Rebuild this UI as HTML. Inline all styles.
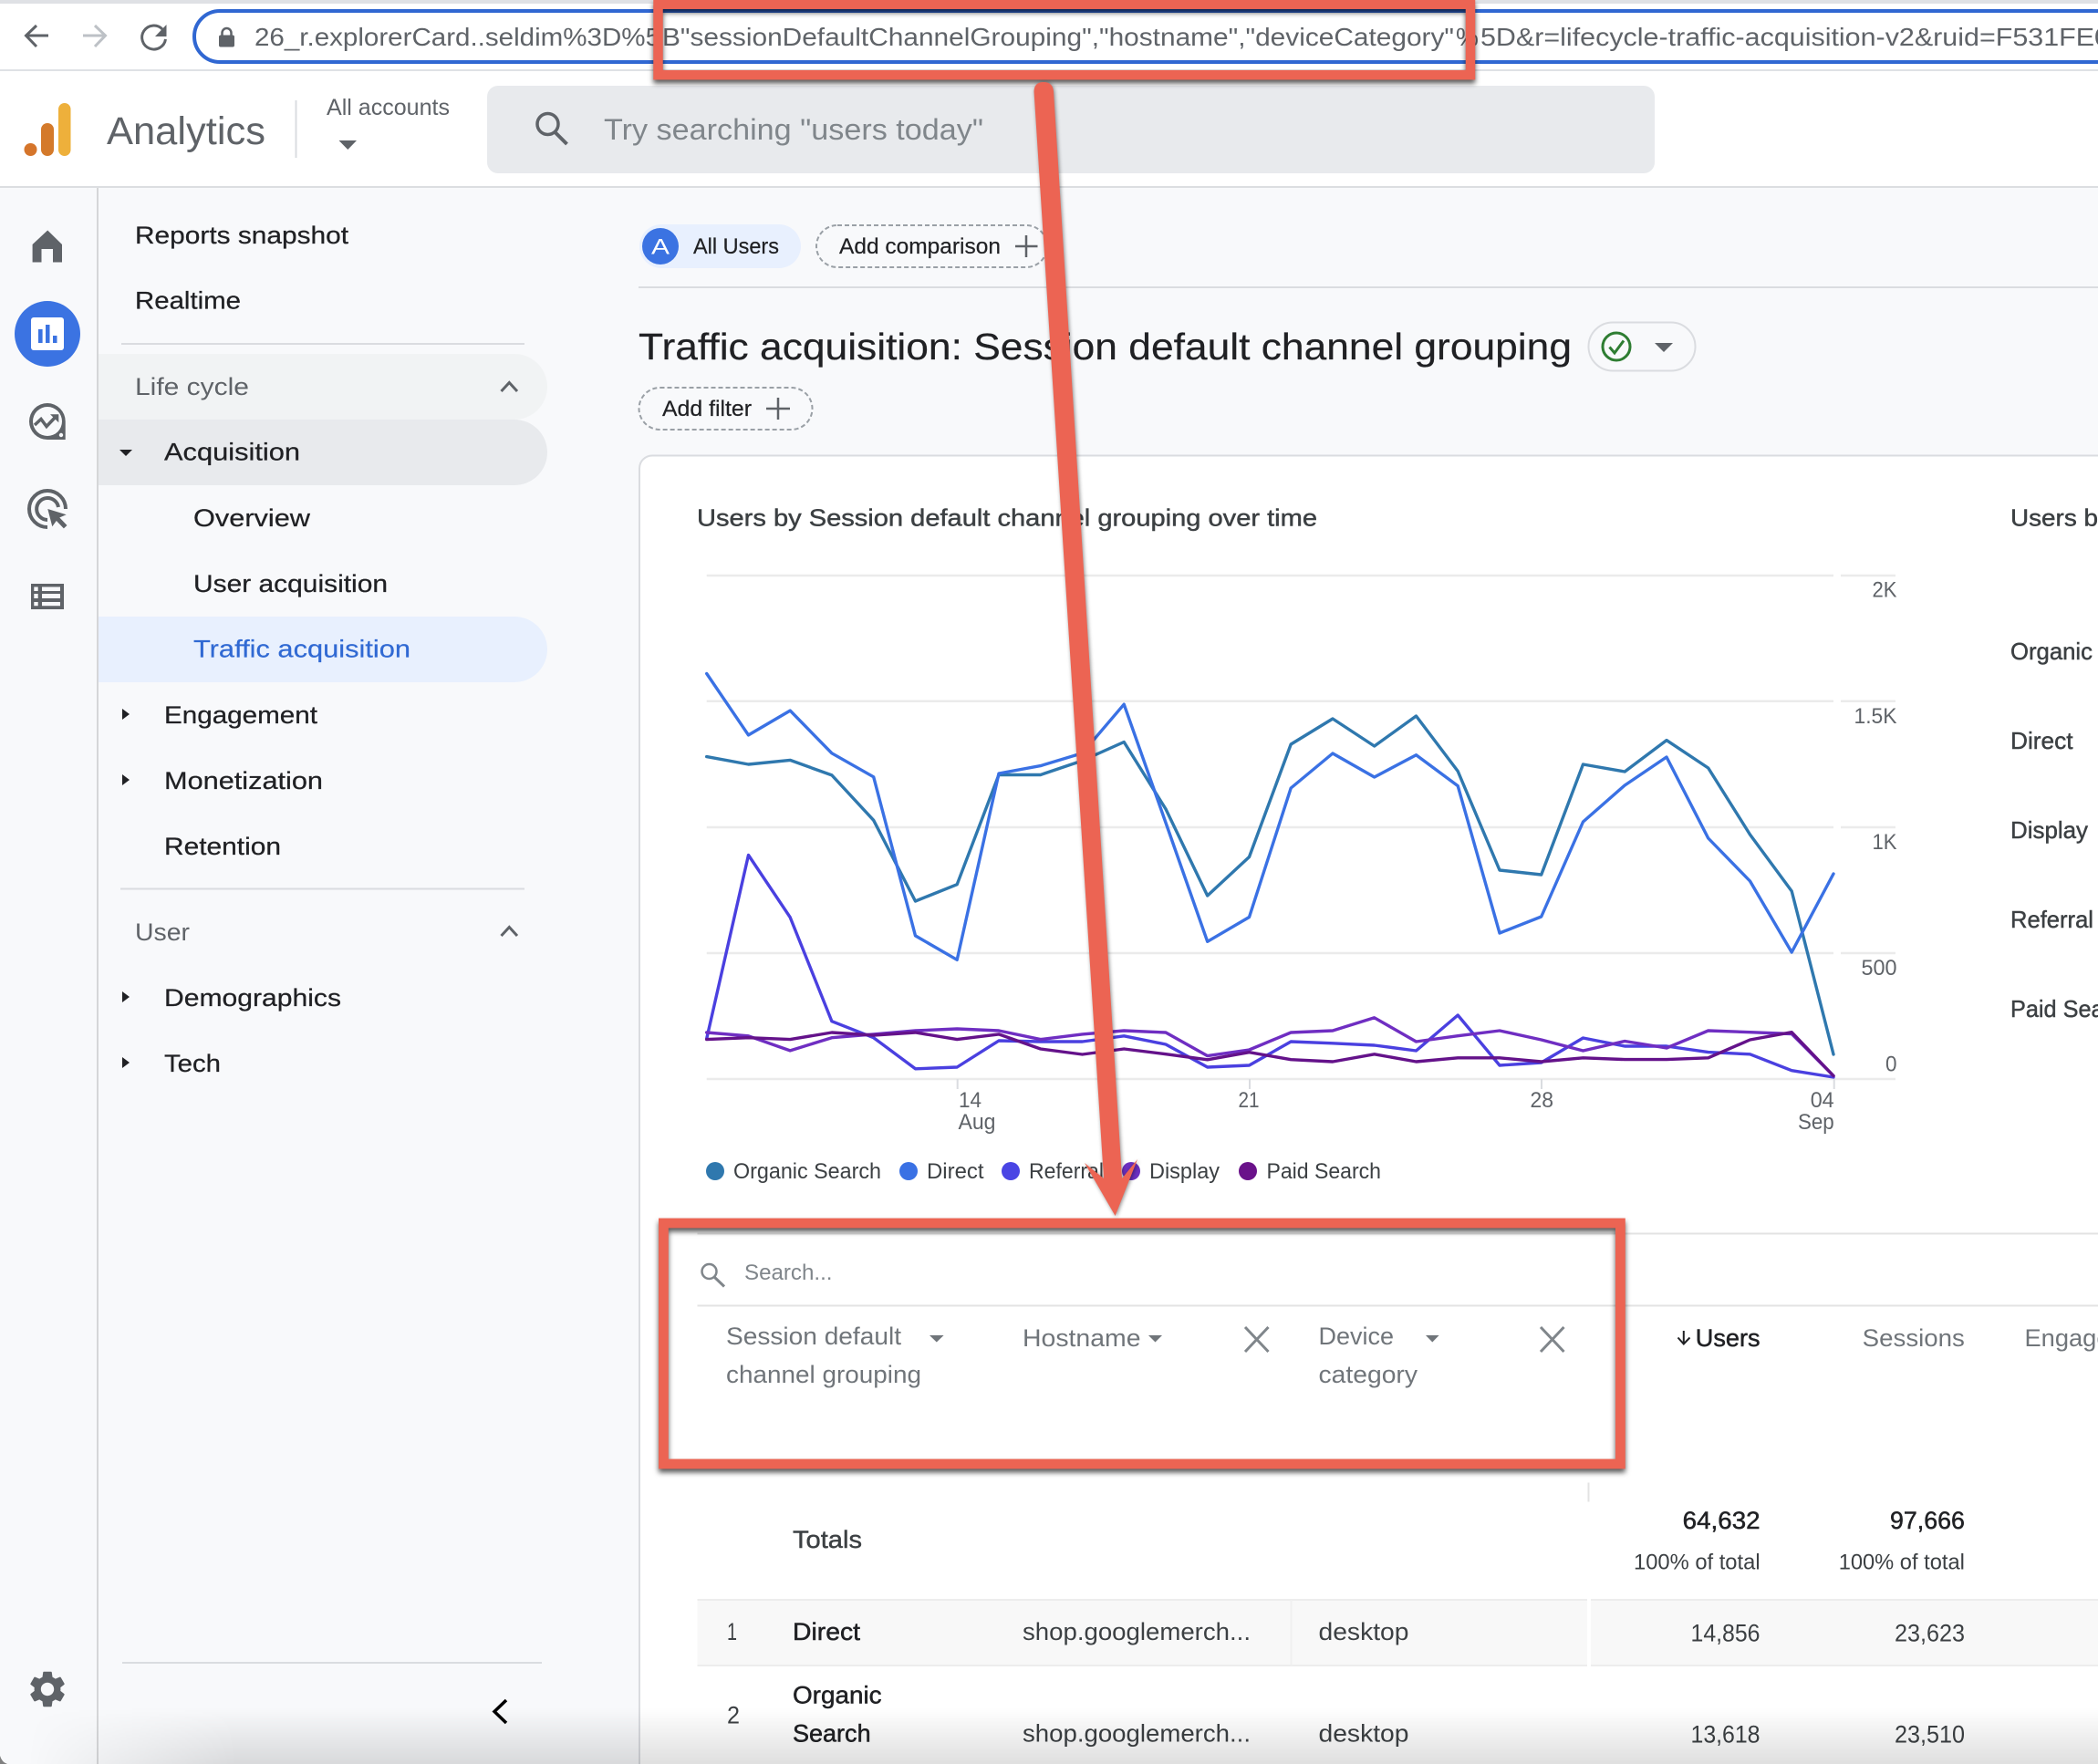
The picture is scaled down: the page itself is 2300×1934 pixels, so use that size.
<!DOCTYPE html>
<html><head><meta charset="utf-8"><title>Analytics</title>
<style>
html,body{margin:0;padding:0;background:#f8f9fb;width:2300px;height:1934px;overflow:hidden}
svg{display:block}
text{font-family:"Liberation Sans",sans-serif;white-space:pre}
.n{font-size:27px;fill:#202124;stroke:#202124;stroke-width:.25}
.g{font-size:27px;fill:#5f6368}
.a{font-size:24px;fill:#5f6368}
.l{font-size:24px;fill:#3c4043}
.h{font-size:27px;fill:#70757a}
.c{font-size:27px;fill:#3c4043}
.m{font-size:26px;fill:#3c4043;stroke:#3c4043;stroke-width:.45}
.b{font-size:27px;fill:#202124;stroke:#202124;stroke-width:.5}
.gr{stroke:#ebebeb;stroke-width:2.5}
.ln{fill:none;stroke-width:3.4;stroke-linejoin:round;stroke-linecap:round}
</style></head><body>
<svg xmlns="http://www.w3.org/2000/svg" width="2300" height="1934" viewBox="0 0 2300 1934">
<defs>
<linearGradient id="vg" gradientUnits="userSpaceOnUse" x1="0" y1="1872" x2="0" y2="1934"><stop offset="0" stop-color="#000" stop-opacity="0"/><stop offset="1" stop-color="#000" stop-opacity=".125"/></linearGradient>
<linearGradient id="hg" gradientUnits="userSpaceOnUse" x1="30" y1="0" x2="260" y2="0"><stop offset="0" stop-color="#000"/><stop offset="1" stop-color="#fff"/></linearGradient>
<mask id="vm" maskUnits="userSpaceOnUse" x="0" y="1860" width="2300" height="74"><rect x="0" y="1860" width="2300" height="74" fill="url(#hg)"/></mask>
</defs>
<rect width="2300" height="1934" fill="#f8f9fb"/>

<!-- browser bar -->
<rect width="2300" height="77" fill="#fff"/>
<rect width="2300" height="4" fill="#dfe1e5"/>
<rect y="76" width="2300" height="2" fill="#dfe1e5"/>
<path d="M53 39H29M40 28L28.500 39L40 51" fill="none" stroke="#5f6368" stroke-width="3"/>
<path d="M91 39H115M104 28L115.500 39L104 51" fill="none" stroke="#bdc1c6" stroke-width="3"/>
<path d="M178 32A13 13 0 1 0 181.500 43" fill="none" stroke="#5f6368" stroke-width="3"/>
<path d="M182.500 27V40H170Z" fill="#5f6368"/>
<path d="M2300 12H241A28 28 0 0 0 241 68H2300" fill="#fff" stroke="#3067d2" stroke-width="4"/>
<rect x="240" y="38.500" width="17" height="13" rx="2" fill="#5f6368"/>
<path d="M243.500 39V36A5 5 0 0 1 253.500 36V39" fill="none" stroke="#5f6368" stroke-width="2.500"/>
<text x="279" y="50" font-size="28" fill="#5f6368" textLength="445" lengthAdjust="spacingAndGlyphs">26_r.explorerCard..seldim%3D%5</text>
<text x="726" y="50" font-size="28" fill="#5f6368" textLength="868" lengthAdjust="spacingAndGlyphs">B"sessionDefaultChannelGrouping","hostname","deviceCategory"</text>
<text x="1596" y="50" font-size="28" fill="#5f6368">%</text>
<text x="1623" y="50" font-size="28" fill="#5f6368" textLength="690" lengthAdjust="spacingAndGlyphs">5D&amp;r=lifecycle-traffic-acquisition-v2&amp;ruid=F531FE0</text>

<!-- app header -->
<rect y="78" width="2300" height="126" fill="#fff"/>
<rect y="204" width="2300" height="2" fill="#dcdee1"/>
<circle cx="33.500" cy="164" r="7" fill="#d5752b"/>
<rect x="45" y="135" width="14" height="36" rx="7" fill="#d47a2b"/>
<rect x="64" y="113" width="13.500" height="58" rx="6.700" fill="#eeb03b"/>
<text x="117" y="158" font-size="43" fill="#5f6368" textLength="174" lengthAdjust="spacingAndGlyphs">Analytics</text>
<rect x="323.500" y="110" width="2" height="63" fill="#dadce0"/>
<text x="358" y="126" font-size="25" fill="#5f6368" textLength="135" lengthAdjust="spacingAndGlyphs">All accounts</text>
<path d="M371.500 154H391L381.300 164Z" fill="#5f6368"/>
<rect x="534" y="94" width="1280" height="96" rx="12" fill="#e8eaed"/>
<circle cx="600.500" cy="136" r="11.500" fill="none" stroke="#5f6368" stroke-width="3.500"/>
<path d="M608.500 145L621.500 158" stroke="#5f6368" stroke-width="4"/>
<text x="662" y="153" font-size="32" fill="#80868b" textLength="416" lengthAdjust="spacingAndGlyphs">Try searching "users today"</text>

<!-- rail -->
<rect x="106" y="206" width="2" height="1728" fill="#d5d6d8"/>
<path d="M52.200 252.500L68 268V287.500H58V273H45.500V287.500H35.600V268Z" fill="#5f6368"/>
<circle cx="52" cy="366" r="36" fill="#3b73e2"/>
<rect x="34" y="348" width="36" height="36" rx="3" fill="#fff"/>
<path d="M42 361h4.600v15H42zM50 356h4.500v20H50zM58 368h4.500v8H58z" fill="#3b73e2"/>
<path fill-rule="evenodd" fill="#5f6368" d="M52 442A20 20 0 0 0 52 482H71.700V462A20 20 0 0 0 52 442ZM52 446A16 16 0 1 1 52 478A16 16 0 1 1 52 446Z"/>
<circle cx="67" cy="477" r="2.200" fill="#f8f9fb"/>
<path d="M38 466L45 459.500L51 467.500L61 457" fill="none" stroke="#5f6368" stroke-width="3.500"/>
<path d="M55 454.300H64.300V463.300Z" fill="#5f6368"/>
<path d="M72 558A20 20 0 1 0 52 578M64 556A12 12 0 1 0 52 570" fill="none" stroke="#5f6368" stroke-width="4"/>
<path d="M52.300 558L72.700 564.300L64 568L57.300 577.300Z" fill="#5f6368"/>
<path d="M62.700 568.300L71.700 577.700" stroke="#5f6368" stroke-width="5"/>
<rect x="34" y="640" width="36" height="28" fill="#5f6368"/>
<path d="M37.300 643.500h4.400v4.500h-4.400zM46 643.500h20v4.500H46zM37.300 651h4.400v5h-4.400zM46 651h20v5H46zM37.300 660h4.400v4.300h-4.400zM46 660h20v4.300H46z" fill="#f8f9fb"/>
<path transform="translate(28 1828) scale(2)" fill="#5f6368" d="M19.140 12.940c.04-.3.06-.61.06-.94 0-.32-.02-.64-.07-.94l2.030-1.580c.18-.14.23-.41.12-.61l-1.920-3.320c-.12-.22-.37-.29-.59-.22l-2.390.96c-.5-.38-1.030-.7-1.620-.94l-.36-2.540c-.04-.24-.24-.41-.48-.41h-3.840c-.24 0-.43.17-.47.41l-.36 2.540c-.59.24-1.130.57-1.620.94l-2.390-.96c-.22-.08-.47 0-.59.22L2.740 8.870c-.12.21-.08.47.12.61l2.030 1.580c-.05.3-.09.63-.09.94s.02.64.07.94l-2.030 1.580c-.18.14-.23.41-.12.61l1.920 3.320c.12.22.37.29.59.22l2.390-.96c.5.38 1.030.7 1.620.94l.36 2.540c.05.24.24.41.48.41h3.840c.24 0 .44-.17.47-.41l.36-2.540c.59-.24 1.130-.56 1.620-.94l2.390.96c.22.08.47 0 .59-.22l1.920-3.320c.12-.22.07-.47-.12-.61l-2.010-1.580zM12 15.600c-1.980 0-3.600-1.620-3.600-3.600s1.620-3.600 3.600-3.600 3.600 1.620 3.600 3.600-1.620 3.600-3.600 3.600z"/>

<!-- nav -->
<text class="n" x="148" y="267" textLength="234" lengthAdjust="spacingAndGlyphs">Reports snapshot</text>
<text class="n" x="148" y="338.500" textLength="116" lengthAdjust="spacingAndGlyphs">Realtime</text>
<rect x="133" y="376" width="442" height="2" fill="#dadce0"/>
<path d="M108 388H564A36 36 0 0 1 600 424A36 36 0 0 1 564 460H108Z" fill="#f1f3f4"/>
<text class="g" x="148" y="433" textLength="125" lengthAdjust="spacingAndGlyphs">Life cycle</text>
<path d="M549.500 429L558.300 419.500L567 429" fill="none" stroke="#5f6368" stroke-width="3"/>
<path d="M108 460H564A36 36 0 0 1 600 496A36 36 0 0 1 564 532H108Z" fill="#e8eaed"/>
<path d="M131 493H145L138 500Z" fill="#202124"/>
<text class="n" x="180" y="504.500" textLength="149" lengthAdjust="spacingAndGlyphs">Acquisition</text>
<text class="n" x="212" y="576.800" textLength="128" lengthAdjust="spacingAndGlyphs">Overview</text>
<text class="n" x="212" y="649" textLength="213" lengthAdjust="spacingAndGlyphs">User acquisition</text>
<path d="M108 676H564A36 36 0 0 1 600 712A36 36 0 0 1 564 748H108Z" fill="#e8f0fe"/>
<text x="212" y="720.700" font-size="27" fill="#3069d3" stroke="#3069d3" stroke-width=".2" textLength="238" lengthAdjust="spacingAndGlyphs">Traffic acquisition</text>
<path d="M134 777L142 783L134 789Z" fill="#202124"/>
<text class="n" x="180" y="793" textLength="168" lengthAdjust="spacingAndGlyphs">Engagement</text>
<path d="M134 849L142 855L134 861Z" fill="#202124"/>
<text class="n" x="180" y="865" textLength="174" lengthAdjust="spacingAndGlyphs">Monetization</text>
<text class="n" x="180" y="937" textLength="128" lengthAdjust="spacingAndGlyphs">Retention</text>
<rect x="132" y="973.500" width="443" height="2" fill="#dadce0"/>
<text class="g" x="148" y="1031" textLength="60" lengthAdjust="spacingAndGlyphs">User</text>
<path d="M549.500 1026L558.300 1016.500L567 1026" fill="none" stroke="#5f6368" stroke-width="3"/>
<path d="M134 1087L142 1093L134 1099Z" fill="#202124"/>
<text class="n" x="180" y="1103" textLength="194" lengthAdjust="spacingAndGlyphs">Demographics</text>
<path d="M134 1159L142 1165L134 1171Z" fill="#202124"/>
<text class="n" x="180" y="1175" textLength="62" lengthAdjust="spacingAndGlyphs">Tech</text>
<rect x="134" y="1822" width="460" height="2" fill="#dadce0"/>
<path d="M555 1864L542 1876.500L555 1889" fill="none" stroke="#000" stroke-width="3.500"/>

<!-- top of main -->
<rect x="701" y="246" width="177" height="48" rx="24" fill="#e8f0fe"/>
<circle cx="724" cy="270" r="20" fill="#3b73e2"/>
<text x="714" y="278.500" font-size="24" fill="#fff" textLength="20" lengthAdjust="spacingAndGlyphs">A</text>
<text x="760" y="278" font-size="24" fill="#202124" stroke="#202124" stroke-width=".2" textLength="94" lengthAdjust="spacingAndGlyphs">All Users</text>
<rect x="895" y="247" width="253" height="46" rx="23" fill="none" stroke="#9aa0a6" stroke-width="2" stroke-dasharray="5 3"/>
<text x="920" y="278" font-size="24" fill="#202124" stroke="#202124" stroke-width=".2" textLength="177" lengthAdjust="spacingAndGlyphs">Add comparison</text>
<path d="M1113 270H1137.500M1125 258V282" stroke="#5f6368" stroke-width="2.500"/>
<rect x="700" y="314" width="1600" height="2" fill="#dadce0"/>
<text x="700" y="394" font-size="41" fill="#202124" stroke="#202124" stroke-width=".2" textLength="1023" lengthAdjust="spacingAndGlyphs">Traffic acquisition: Session default channel grouping</text>
<rect x="1741.500" y="353.500" width="117" height="53" rx="26.500" fill="none" stroke="#dadce0" stroke-width="2"/>
<circle cx="1772" cy="380" r="15" fill="none" stroke="#2e7d32" stroke-width="3"/>
<path d="M1764.500 380.500L1770 387L1780 373.500" fill="none" stroke="#2e7d32" stroke-width="3"/>
<path d="M1814 376H1834L1824 386Z" fill="#5f6368"/>
<rect x="700.500" y="425" width="190" height="46" rx="23" fill="none" stroke="#9aa0a6" stroke-width="2" stroke-dasharray="5 3"/>
<text x="726" y="456" font-size="24" fill="#202124" stroke="#202124" stroke-width=".2" textLength="98" lengthAdjust="spacingAndGlyphs">Add filter</text>
<path d="M840 448H866M853 436V460" stroke="#5f6368" stroke-width="2.500"/>

<!-- card -->
<path d="M2301 499.500H715A14 14 0 0 0 701 513.500V1936H2301Z" fill="#fff" stroke="#dadce0" stroke-width="2"/>
<text class="m" x="764" y="576.500" textLength="680" lengthAdjust="spacingAndGlyphs">Users by Session default channel grouping over time</text>
<text class="m" x="2204" y="576.500" textLength="96" lengthAdjust="spacingAndGlyphs">Users b</text>
<text class="m" x="2204" y="723" textLength="90" lengthAdjust="spacingAndGlyphs">Organic</text>
<text class="m" x="2204" y="821" textLength="68.500" lengthAdjust="spacingAndGlyphs">Direct</text>
<text class="m" x="2204" y="919" textLength="85" lengthAdjust="spacingAndGlyphs">Display</text>
<text class="m" x="2204" y="1017" textLength="91" lengthAdjust="spacingAndGlyphs">Referral</text>
<text class="m" x="2204" y="1115" textLength="111" lengthAdjust="spacingAndGlyphs">Paid Sear</text>

<!-- chart grid -->
<g class="gr">
<path d="M774.700 631H2010M2018 631H2078"/>
<path d="M774.700 768.700H2010M2018 768.700H2078"/>
<path d="M774.700 907H2010M2018 907H2078"/>
<path d="M774.700 1045H2010M2018 1045H2078"/>
<path d="M774.700 1183H2078"/>
</g>
<path d="M1049.700 1183V1194M1370 1183V1194M1690 1183V1194M2010.700 1183V1194" stroke="#dadce0" stroke-width="2"/>
<text class="a" x="2052.500" y="654.500" textLength="27" lengthAdjust="spacingAndGlyphs">2K</text>
<text class="a" x="2032.500" y="793" textLength="47" lengthAdjust="spacingAndGlyphs">1.5K</text>
<text class="a" x="2052.500" y="931" textLength="27" lengthAdjust="spacingAndGlyphs">1K</text>
<text class="a" x="2040.500" y="1069" textLength="39" lengthAdjust="spacingAndGlyphs">500</text>
<text class="a" x="2067" y="1174.500" textLength="12.500" lengthAdjust="spacingAndGlyphs">0</text>
<text class="a" x="1051" y="1214" textLength="25" lengthAdjust="spacingAndGlyphs">14</text>
<text class="a" x="1050.500" y="1238" textLength="41" lengthAdjust="spacingAndGlyphs">Aug</text>
<text class="a" x="1357.500" y="1214" textLength="23" lengthAdjust="spacingAndGlyphs">21</text>
<text class="a" x="1677.500" y="1214" textLength="25.500" lengthAdjust="spacingAndGlyphs">28</text>
<text class="a" x="1984.700" y="1214" textLength="26" lengthAdjust="spacingAndGlyphs">04</text>
<text class="a" x="1971" y="1238" textLength="39.700" lengthAdjust="spacingAndGlyphs">Sep</text>

<!-- lines -->
<polyline class="ln" stroke="#2f78ae" points="774.700,829.600 820.500,838 866.200,833.400 911.900,849.900 957.700,899.300 1003.500,988 1049.200,969.700 1095,849.500 1140.700,849.500 1186.500,834 1232.200,813.500 1278,887 1323.700,982 1369.500,939.500 1415.200,816 1461,788 1506.700,818 1552.500,785 1598.200,845.500 1644,954 1689.700,959 1735.500,838 1781.200,846 1827,811.600 1872.700,842 1918.500,915 1964.200,977 2010,1156"/>
<polyline class="ln" stroke="#3a71e4" points="774.700,738.500 820.500,805.900 866.200,779.100 911.900,825.800 957.700,851.800 1003.500,1025.900 1049.200,1052.300 1095,848 1140.700,839.600 1186.500,825.800 1232.200,772.200 1278,902 1323.700,1032.300 1369.500,1005.500 1415.200,864 1461,826 1506.700,852 1552.500,827.700 1598.200,861.600 1644,1023 1689.700,1005 1735.500,901 1781.200,861 1827,830 1872.700,919 1918.500,966 1964.200,1044 2010,958"/>
<polyline class="ln" stroke="#4a40e0" points="774.700,1138.800 820.500,937.500 866.200,1005.700 911.900,1119.700 957.700,1137.700 1003.500,1171.800 1049.200,1170 1095,1141 1140.700,1142 1186.500,1142 1232.200,1135.800 1278,1145 1323.700,1170 1369.500,1168 1415.200,1142 1461,1143.800 1506.700,1146 1552.500,1152 1598.200,1113 1644,1168 1689.700,1165 1735.500,1138 1781.200,1147 1827,1147 1872.700,1153.600 1918.500,1155.800 1964.200,1173.700 2010,1181"/>
<polyline class="ln" stroke="#6f2ec2" points="774.700,1132 820.500,1135.800 866.200,1151.900 911.900,1137.700 957.700,1133.900 1003.500,1130 1049.200,1128 1095,1130 1140.700,1139.600 1186.500,1133.900 1232.200,1130 1278,1132 1323.700,1157.600 1369.500,1151 1415.200,1132 1461,1130 1506.700,1115.800 1552.500,1142 1598.200,1135.700 1644,1130 1689.700,1140 1735.500,1152 1781.200,1141.500 1827,1149 1872.700,1130 1918.500,1131.700 1964.200,1133.500 2010,1179.500"/>
<polyline class="ln" stroke="#64128a" points="774.700,1139.600 820.500,1137.700 866.200,1139.600 911.900,1132 957.700,1135 1003.500,1132 1049.200,1139.600 1095,1133.900 1140.700,1150 1186.500,1156 1232.200,1150 1278,1155.700 1323.700,1161.800 1369.500,1153.700 1415.200,1161.700 1461,1164 1506.700,1155.800 1552.500,1164 1598.200,1159.800 1644,1159.800 1689.700,1164 1735.500,1159.800 1781.200,1161.600 1827,1161.600 1872.700,1159.800 1918.500,1140 1964.200,1131.700 2010,1179.500"/>

<!-- legend -->
<circle cx="784" cy="1284" r="10" fill="#2f78ae"/>
<text class="l" x="804" y="1292" textLength="162" lengthAdjust="spacingAndGlyphs">Organic Search</text>
<circle cx="996" cy="1284" r="10" fill="#3a71e4"/>
<text class="l" x="1016" y="1292" textLength="62.500" lengthAdjust="spacingAndGlyphs">Direct</text>
<circle cx="1108" cy="1284" r="10" fill="#4a45e4"/>
<text class="l" x="1128" y="1292" textLength="82" lengthAdjust="spacingAndGlyphs">Referral</text>
<circle cx="1240" cy="1284" r="10" fill="#6b2fc0"/>
<text class="l" x="1260" y="1292" textLength="77" lengthAdjust="spacingAndGlyphs">Display</text>
<circle cx="1368" cy="1284" r="10" fill="#6a128a"/>
<text class="l" x="1388.500" y="1292" textLength="125.500" lengthAdjust="spacingAndGlyphs">Paid Search</text>

<!-- table header -->
<rect x="764.500" y="1351.500" width="1536" height="2" fill="#e3e3e3"/>
<rect x="764.500" y="1430.500" width="1536" height="2" fill="#e3e3e3"/>
<circle cx="777.500" cy="1394" r="8" fill="none" stroke="#80868b" stroke-width="2.500"/>
<path d="M783 1400L794 1410.500" stroke="#80868b" stroke-width="3"/>
<text x="816" y="1403" font-size="24" fill="#80868b" textLength="96.500" lengthAdjust="spacingAndGlyphs">Search...</text>
<text class="h" x="796" y="1474" textLength="192" lengthAdjust="spacingAndGlyphs">Session default</text>
<text class="h" x="796" y="1516" textLength="214" lengthAdjust="spacingAndGlyphs">channel grouping</text>
<path d="M1019 1464H1034.600L1026.800 1471.500Z" fill="#70757a"/>
<text class="h" x="1121" y="1476" textLength="129.500" lengthAdjust="spacingAndGlyphs">Hostname</text>
<path d="M1259 1464H1274L1266.500 1471.500Z" fill="#70757a"/>
<path d="M1365 1455L1390.500 1482M1390.500 1455L1365 1482" stroke="#80868b" stroke-width="3"/>
<text class="h" x="1445.500" y="1474" textLength="82.500" lengthAdjust="spacingAndGlyphs">Device</text>
<text class="h" x="1445.500" y="1516" textLength="108.500" lengthAdjust="spacingAndGlyphs">category</text>
<path d="M1563 1464H1577.600L1570.300 1471.500Z" fill="#70757a"/>
<path d="M1689 1455L1714.500 1482M1714.500 1455L1689 1482" stroke="#80868b" stroke-width="3"/>
<path d="M1845.800 1459V1473M1839.500 1466.500L1845.800 1473.500L1852.500 1466.500" fill="none" stroke="#202124" stroke-width="2"/>
<text class="b" x="1858.800" y="1476" textLength="70.800" lengthAdjust="spacingAndGlyphs">Users</text>
<text class="h" x="2041.700" y="1476" textLength="112.200" lengthAdjust="spacingAndGlyphs">Sessions</text>
<text class="h" x="2219.500" y="1476" textLength="94" lengthAdjust="spacingAndGlyphs">Engage</text>
<rect x="1740.500" y="1625.500" width="2" height="21" fill="#e3e3e3"/>

<!-- totals -->
<text x="869" y="1697" font-size="27" fill="#3c4043" stroke="#3c4043" stroke-width=".4" textLength="76" lengthAdjust="spacingAndGlyphs">Totals</text>
<text class="b" x="1844.700" y="1676" textLength="84.900" lengthAdjust="spacingAndGlyphs">64,632</text>
<text class="b" x="2072" y="1676" textLength="81.900" lengthAdjust="spacingAndGlyphs">97,666</text>
<text x="1791" y="1720.500" font-size="24" fill="#3c4043" textLength="138.600" lengthAdjust="spacingAndGlyphs">100% of total</text>
<text x="2015.700" y="1720.500" font-size="24" fill="#3c4043" textLength="138.200" lengthAdjust="spacingAndGlyphs">100% of total</text>

<!-- rows -->
<rect x="764.500" y="1754" width="975.500" height="72" fill="#f8f8f8"/>
<rect x="1744" y="1754" width="556" height="72" fill="#f8f8f8"/>
<path d="M764.500 1754H1740M1744 1754H2300M764.500 1826H1740M1744 1826H2300" stroke="#ededed" stroke-width="2"/>
<rect x="1414.500" y="1754" width="2" height="72" fill="#f0f0f0"/>
<text class="c" x="797" y="1798" textLength="11" lengthAdjust="spacingAndGlyphs">1</text>
<text x="869" y="1798" font-size="27" fill="#202124" stroke="#202124" stroke-width=".5" textLength="74" lengthAdjust="spacingAndGlyphs">Direct</text>
<text class="c" x="1121" y="1798" textLength="250" lengthAdjust="spacingAndGlyphs">shop.googlemerch...</text>
<text class="c" x="1445.500" y="1798" textLength="99" lengthAdjust="spacingAndGlyphs">desktop</text>
<text class="c" x="1853.500" y="1799.500" textLength="76" lengthAdjust="spacingAndGlyphs">14,856</text>
<text class="c" x="2077" y="1799.500" textLength="77" lengthAdjust="spacingAndGlyphs">23,623</text>
<text class="c" x="797" y="1889.500" textLength="14" lengthAdjust="spacingAndGlyphs">2</text>
<text x="869" y="1867.500" font-size="27" fill="#202124" stroke="#202124" stroke-width=".5" textLength="97.600" lengthAdjust="spacingAndGlyphs">Organic</text>
<text x="869" y="1909.500" font-size="27" fill="#202124" stroke="#202124" stroke-width=".5" textLength="85.600" lengthAdjust="spacingAndGlyphs">Search</text>
<text class="c" x="1121" y="1909.500" textLength="250" lengthAdjust="spacingAndGlyphs">shop.googlemerch...</text>
<text class="c" x="1445.500" y="1909.500" textLength="99" lengthAdjust="spacingAndGlyphs">desktop</text>
<text class="c" x="1853.500" y="1910.500" textLength="76" lengthAdjust="spacingAndGlyphs">13,618</text>
<text class="c" x="2077" y="1910.500" textLength="77" lengthAdjust="spacingAndGlyphs">23,510</text>

<!-- annotations -->
<g style="filter:drop-shadow(0 4px 3px rgba(0,0,0,.65))">
<rect x="721.500" y="4.700" width="890.500" height="77.500" fill="none" stroke="#ec6453" stroke-width="10.500"/>
<rect x="727.400" y="1341" width="1049" height="264" fill="none" stroke="#ec6453" stroke-width="10.800"/>
</g>
<path d="M1133.500 100Q1134 90 1144 90Q1154 90 1155 100L1230 1292L1247 1271L1222.600 1333L1189 1275L1210 1292Z" fill="#ec6453" style="filter:drop-shadow(1px 1px 2px rgba(0,0,0,.45))"/>

<!-- bottom vignette -->
<rect x="0" y="1860" width="2300" height="74" fill="url(#vg)" mask="url(#vm)"/>
<path d="M0 1925Q2 1932 8 1934H0Z" fill="#808080"/>
</svg>
</body></html>
